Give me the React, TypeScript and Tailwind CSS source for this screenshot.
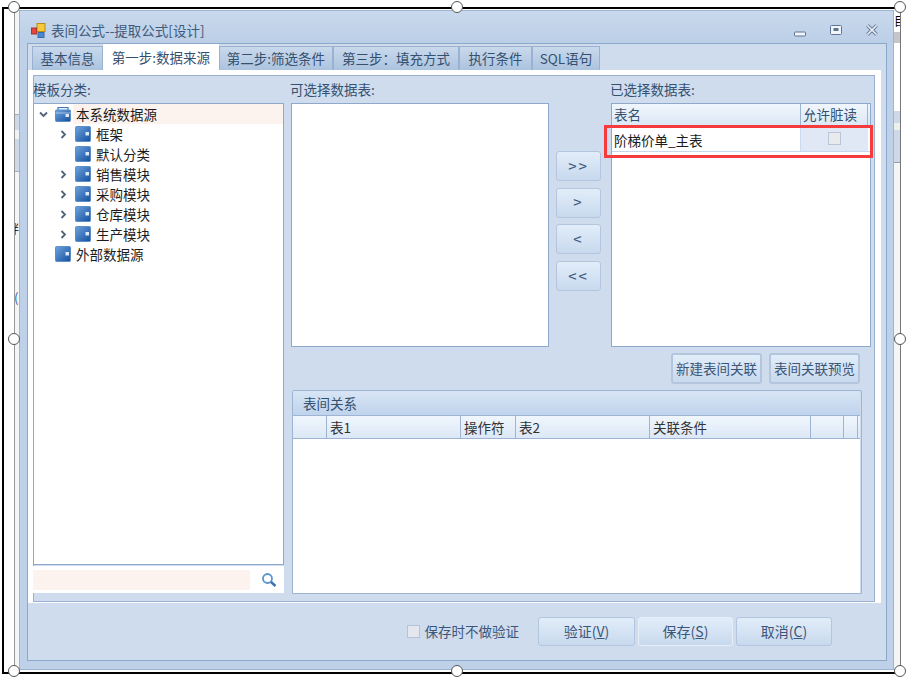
import type { ReactNode } from "react";

const font = { fontFamily: '"Noto Sans CJK SC", "Liberation Sans", sans-serif' };

function FolderIcon({ root = false }: { root?: boolean }) {
  return (
    <svg width="16" height="16" viewBox="0 0 16 16" className="shrink-0">
      <defs>
        <linearGradient id="fold" x1="0" y1="0" x2="1" y2="1">
          <stop offset="0" stopColor="#6ea4de" />
          <stop offset="1" stopColor="#134f9f" />
        </linearGradient>
      </defs>
      {root && <path d="M3 4V1.5h10V4" fill="#e8f0fa" stroke="#3f78b8" strokeWidth="1.2" />}
      <rect x="0.5" y={root ? 4 : 0.5} width="15" height={root ? 11.5 : 15} rx="1" fill="url(#fold)" stroke="#5c8ec8" />
      <path d={root ? "M14 8h-3.5v3H14" : "M14 6h-3.5v3.5H14"} fill="#dbe9f8" />
      {root && <path d="M0.5 7h15" stroke="#bcd4ee" strokeWidth="0.8" />}
    </svg>
  );
}

function Chevron({ open = false }: { open?: boolean }) {
  return (
    <svg width="9" height="9" viewBox="0 0 9 9" fill="none" stroke="#51627a" strokeWidth="1.8">
      {open ? <path d="M1 2.5 4.5 6 8 2.5" /> : <path d="M2.5 1 6 4.5 2.5 8" />}
    </svg>
  );
}

function TreeRow({ label, level, arrow, open, selected }: { label: string; level: number; arrow?: boolean; open?: boolean; selected?: boolean }) {
  return (
    <div className={`flex h-5 items-center ${level === 1 ? "pl-[20px]" : ""}`}>
      <span className="flex w-[21px] shrink-0 items-center justify-center pr-[2px]">{arrow && <Chevron open={open} />}</span>
      <FolderIcon root={selected} />
      <span className={`ml-[2px] flex h-5 flex-1 items-center pl-[3px] text-[13.5px] text-[#1c1c1c] ${selected ? "bg-[#fdf3ee]" : ""}`}>{label}</span>
    </div>
  );
}

function SoftButton({ children, className }: { children: ReactNode; className: string }) {
  return (
    <div className={`flex items-center justify-center rounded-[3px] border border-[#b3c6de] bg-linear-to-b from-[#e2edf9] to-[#c8d9ee] text-[#3b5679] ${className}`}>
      {children}
    </div>
  );
}

function Handle({ className }: { className: string }) {
  return <div className={`absolute h-[12px] w-[12px] rounded-full border border-[#555] bg-white ${className}`} />;
}

const tabs = [
  { label: "基本信息", w: "w-[71px]" },
  { label: "第一步:数据来源", w: "w-[116px]", active: true },
  { label: "第二步:筛选条件", w: "w-[114px]" },
  { label: "第三步：填充方式", w: "w-[126px]" },
  { label: "执行条件", w: "w-[73px]" },
  { label: "SQL语句", w: "w-[68px]" },
];

const relationCols = [
  { label: "", w: "w-[34px]" },
  { label: "表1", w: "w-[134px]" },
  { label: "操作符", w: "w-[55px]" },
  { label: "表2", w: "w-[134px]" },
  { label: "关联条件", w: "w-[161px]" },
  { label: "", w: "w-[33px]" },
  { label: "", w: "w-[14px]" },
];

export default function App() {
  return (
    <div className="relative h-[677px] w-[907px] overflow-hidden bg-white" style={font}>
      <div className="ml-[2px] mt-[7px] flex h-[667px] w-[899px] border-t-2 border-b-2 border-l-2 border-r border-t-black border-b-black border-l-black border-r-[#777]">
        <div className="w-[10px] shrink-0" />

        {/* Sliver of the page behind the window, left side */}
        <div className="flex w-[5px] shrink-0 flex-col overflow-hidden border-l border-[#999] bg-[#f4f5f6]">
          <div className="h-[105px] shrink-0" />
          <div className="h-[16px] shrink-0 border-t border-[#aab] bg-[#cdd9e8]" />
          <div className="h-[9px] shrink-0 bg-[#f0f2f4]" />
          <div className="h-[33px] shrink-0 border-b border-[#aab] bg-[#cdd9e8]" />
          <div className="h-[50px] shrink-0" />
          <div className="-ml-[8px] h-[14px] shrink-0 text-[12px] leading-[14px] text-black">胖</div>
          <div className="h-[20px] shrink-0" />
          <div className="-ml-[8px] h-[14px] shrink-0 text-[12px] leading-[14px] text-[#333]">/</div>
          <div className="h-[20px] shrink-0" />
          <div className="-ml-[1px] h-[16px] shrink-0 text-[13px] leading-[16px] text-[#3a5f9a]">(</div>
        </div>

        {/* Window */}
        <div className="mt-px flex h-[660px] w-[875px] shrink-0 flex-col border border-[#9db4d2] bg-[#bed1e8]">
          <div className="flex h-[32px] shrink-0 items-center bg-linear-to-b from-[#c9d9ed] to-[#bbcfe7] pl-[11px] pr-[14px] pt-[6px]">
            <svg width="15" height="15" viewBox="0 0 15 15" className="shrink-0">
              <rect x="6" y="0.5" width="8" height="8" fill="#f5c93a" stroke="#b98a20" />
              <rect x="0.5" y="5" width="5" height="6" fill="#e8443a" stroke="#a33" />
              <rect x="7" y="9.5" width="6" height="5" fill="#4f86d0" stroke="#3a6aa8" />
            </svg>
            <span className="ml-[5px] text-[13.5px] text-[#405a7c]">表间公式--提取公式[设计]</span>
            <div className="ml-auto flex items-center gap-[22px]">
              <svg width="14" height="14" viewBox="0 0 14 14" fill="none" className="mt-[3px]">
                <rect x="1.5" y="7" width="11" height="4" rx="1" fill="#f2f6fb" stroke="#5c7595" />
              </svg>
              <svg width="14" height="14" viewBox="0 0 14 14" fill="none">
                <rect x="1.5" y="2.5" width="11" height="9" rx="1" fill="#f2f6fb" stroke="#5c7595" />
                <rect x="4.5" y="5" width="5" height="3" fill="#5c7595" />
              </svg>
              <svg width="14" height="14" viewBox="0 0 14 14" fill="none">
                <path d="M2.5 2.5 11.5 11.5M11.5 2.5 2.5 11.5" stroke="#5c7595" strokeWidth="3.4" />
                <path d="M2.5 2.5 11.5 11.5M11.5 2.5 2.5 11.5" stroke="#f2f6fb" strokeWidth="1.6" />
              </svg>
            </div>
          </div>

          <div className="ml-[7px] flex h-[618px] w-[860px] flex-col border border-[#8ba7c9] bg-[#cfdcee]">
            {/* Tabs */}
            <div className="flex h-[26px] shrink-0 items-end pl-[4px]">
              {tabs.map((tab) =>
                tab.active ? (
                  <div key={tab.label} className={`z-10 -mb-px flex h-[27px] items-center justify-center bg-white text-[13.5px] text-[#34506f] ${tab.w}`}>
                    {tab.label}
                  </div>
                ) : (
                  <div key={tab.label} className={`flex h-[24px] items-center justify-center border border-b-0 border-[#9ab2d0] bg-linear-to-b from-[#c9d9ec] to-[#acc3df] text-[13.5px] text-[#34506f] ${tab.w}`}>
                    {tab.label}
                  </div>
                ),
              )}
            </div>

            {/* Tab page */}
            <div className="h-[533px] w-[853px] shrink-0 bg-white pl-[5px] pt-[5px]">
              <div className="flex h-[527px] w-[842px] border border-[#9ab0ce] bg-[#cfdcee] text-[13.5px] text-[#34506f]">
                {/* Left column */}
                <div className="-ml-px flex w-[251px] shrink-0 flex-col">
                  <div className="flex h-[27px] items-center">模板分类:</div>
                  <div className="h-[462px] border border-[#8fa9ca] bg-white">
                    <TreeRow label="本系统数据源" level={0} arrow open selected />
                    <TreeRow label="框架" level={1} arrow />
                    <TreeRow label="默认分类" level={1} />
                    <TreeRow label="销售模块" level={1} arrow />
                    <TreeRow label="采购模块" level={1} arrow />
                    <TreeRow label="仓库模块" level={1} arrow />
                    <TreeRow label="生产模块" level={1} arrow />
                    <TreeRow label="外部数据源" level={0} />
                  </div>
                  <div className="mt-px flex h-[27px] items-center bg-white">
                    <div className="h-[20px] w-[217px] bg-[#fdf3ee]" />
                    <svg width="16" height="16" viewBox="0 0 16 16" fill="none" className="ml-[11px]">
                      <circle cx="6.5" cy="6.5" r="4.5" stroke="#5b93cc" strokeWidth="1.8" />
                      <path d="M10 10l4.5 4" stroke="#3c73ad" strokeWidth="2.4" />
                    </svg>
                  </div>
                </div>

                {/* Right column */}
                <div className="flex flex-1 flex-col pl-[7px]">
                  <div className="flex h-[271px] shrink-0">
                    <div className="flex w-[258px] flex-col">
                      <div className="-ml-px flex h-[27px] shrink-0 items-center">可选择数据表:</div>
                      <div className="flex-1 border border-[#8fa9ca] bg-white" />
                    </div>
                    <div className="ml-[7px] flex w-[45px] flex-col gap-[6.67px] pt-[75px] text-[15px] tracking-[2px]">
                      <SoftButton className="h-[30px]">&gt;&gt;</SoftButton>
                      <SoftButton className="h-[30px]">&gt;</SoftButton>
                      <SoftButton className="h-[30px]">&lt;</SoftButton>
                      <SoftButton className="h-[30px]">&lt;&lt;</SoftButton>
                    </div>
                    <div className="ml-[10px] flex w-[260px] flex-col">
                      <div className="-ml-px flex h-[27px] shrink-0 items-center">已选择数据表:</div>
                      <div className="relative flex-1 border border-[#8fa9ca] bg-white">
                        <div className="flex h-[22px] border-b border-[#b6cae2] bg-linear-to-b from-[#f0f6fc] to-[#dce8f6]">
                          <div className="flex w-[189px] items-center border-r border-[#9db4d2] pl-[2px]">表名</div>
                          <div className="flex w-[67px] items-center border-r border-[#9db4d2] pl-[2px]">允许脏读</div>
                        </div>
                        <div className="flex h-[26px] border-b border-[#c5d7ec] text-[13.5px] text-[#1c1c1c]">
                          <div className="flex w-[189px] items-center border-r border-[#cbdaec] pl-[2px] pt-[3px]">阶梯价单_主表</div>
                          <div className="flex w-[67px] items-center justify-center bg-[#dfe8f4]">
                            <div className="h-[13px] w-[13px] border border-[#b8c6d8] bg-[#e9eaec]" />
                          </div>
                        </div>
                        {/* Red highlight drawn over the grid row */}
                        <div className="absolute left-[-8px] top-[21px] h-[33px] w-[269px] border-[3px] border-[#f53b3b]" />
                      </div>
                    </div>
                  </div>

                  <div className="mt-[6px] flex justify-end gap-[7px] pr-[14px]">
                    <SoftButton className="h-[31px] w-[91px] border-2">新建表间关联</SoftButton>
                    <SoftButton className="h-[31px] w-[91px] border-2">表间关联预览</SoftButton>
                  </div>

                  <div className="ml-px mt-[6px] flex h-[204px] w-[570px] flex-col rounded-t-[2px] border border-[#9db4d2] bg-[#cfdcee] pr-[1px]">
                    <div className="flex h-[24px] shrink-0 items-center bg-linear-to-b from-[#d8e5f5] to-[#bfd3ec] pl-[10px]">表间关系</div>
                    <div className="flex h-[24px] shrink-0 border-y border-[#9db4d2] bg-linear-to-b from-[#f0f6fc] to-[#dce8f6] text-[#333]">
                      {relationCols.map((col, i) => (
                        <div key={i} className={`flex items-center border-r border-[#9db4d2] pl-[3px] ${col.w}`}>
                          {col.label}
                        </div>
                      ))}
                    </div>
                    <div className="flex-1 bg-white" />
                  </div>
                </div>
              </div>
            </div>

            {/* Bottom bar */}
            <div className="flex flex-1 items-center justify-end py-px pr-[54px] text-[13px] text-[#3b5679]">
              <div className="h-[13px] w-[13px] border border-[#b3c4da] bg-[#e4e8ee]" />
              <span className="ml-[5px] mr-[19px] text-[13.5px]">保存时不做验证</span>
              <div className="flex gap-[3px] text-[14px]">
                <SoftButton className="h-[29px] w-[97px]">
                  <span>验证(<span className="underline">V</span>)</span>
                </SoftButton>
                <SoftButton className="h-[29px] w-[95px] border-[#e6eef8]">
                  <span>保存(<span className="underline">S</span>)</span>
                </SoftButton>
                <SoftButton className="h-[29px] w-[96px]">
                  <span>取消(<span className="underline">C</span>)</span>
                </SoftButton>
              </div>
            </div>
          </div>
        </div>

        {/* Sliver of the page behind the window, right side */}
        <div className="flex flex-1 flex-col overflow-hidden bg-white">
          <div className="h-[23px] shrink-0 text-[12px] leading-[23px] text-black">目</div>
          <div className="h-[11px] shrink-0 bg-[#c4c6ca]" />
          <div className="h-[68px] shrink-0 bg-white" />
          <div className="h-[12px] shrink-0 bg-[#cdd9e8]" />
          <div className="h-[7px] shrink-0 bg-[#eef0ec]" />
          <div className="h-[33px] shrink-0 border-b border-[#99a] bg-[#cdd9e8]" />
          <div className="flex-1 bg-[#f4f5f6]" />
        </div>
      </div>

      <Handle className="left-[8px] top-px" />
      <Handle className="left-[451px] top-px" />
      <Handle className="left-[894px] top-px" />
      <Handle className="left-[8px] top-[333px]" />
      <Handle className="left-[894px] top-[333px]" />
      <Handle className="left-[8px] top-[665px]" />
      <Handle className="left-[451px] top-[665px]" />
      <Handle className="left-[894px] top-[665px]" />
    </div>
  );
}
